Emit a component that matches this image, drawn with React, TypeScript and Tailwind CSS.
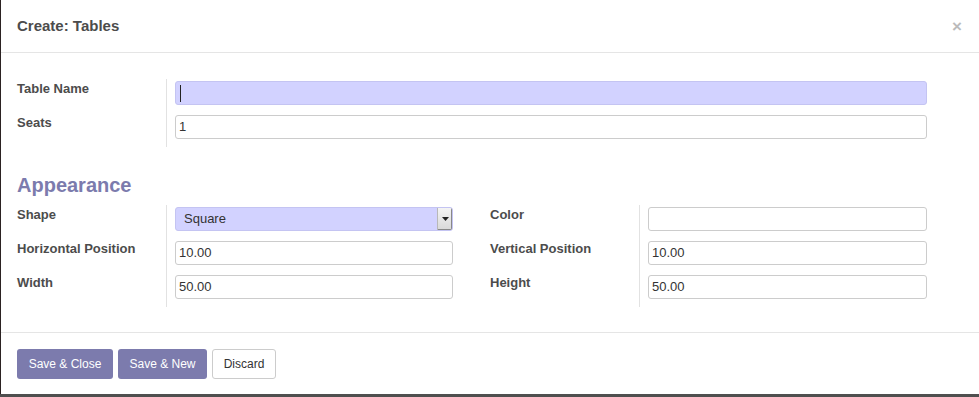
import React from 'react'

const font = { fontFamily: '"Liberation Sans", Arial, sans-serif' }

function Label({ children }: { children: React.ReactNode }) {
  return (
    <div className="w-[149px] shrink-0 pt-[2px] text-[13px] leading-[16px] font-bold text-[#4c4c4c]">
      {children}
    </div>
  )
}

function TextInput({ value, focused }: { value?: string; focused?: boolean }) {
  return (
    <div
      className={`h-[24px] rounded-[3px] border flex items-center pl-[3px] text-[13px] text-[#333] ${
        focused ? 'bg-[#d2d2ff] border-[#c4c4f2]' : 'bg-white border-[#cccccc]'
      }`}
    >
      {focused && <span className="ml-[1px] w-[1px] h-[17px] bg-[#222]" />}
      {value}
    </div>
  )
}

function Row({
  label,
  children,
}: {
  label: string
  children: React.ReactNode
}) {
  return (
    <div className="flex h-[34px]">
      <Label>{label}</Label>
      <div className="flex-1 border-l border-[#e2e2e2] pl-[8px] pt-[2px]">{children}</div>
    </div>
  )
}

function SelectBox({ value }: { value: string }) {
  return (
    <div className="h-[24px] rounded-[3px] border border-[#c4c4f2] bg-[#d2d2ff] flex items-center text-[13px] text-[#333] overflow-hidden">
      <span className="pl-[8px] flex-1">{value}</span>
      <div className="w-[15px] h-[22px] bg-gradient-to-b from-[#f4f4f4] to-[#d8d8d8] border-l border-[#b8b8b8] shadow-[inset_-1px_-1px_0_#888] flex items-center justify-center">
        <svg width="7" height="4" viewBox="0 0 7 4">
          <path d="M0 0h7L3.5 4z" fill="#222" />
        </svg>
      </div>
    </div>
  )
}

export default function App() {
  return (
    <div className="w-[979px] h-[397px] flex flex-col bg-white" style={font}>
      <div className="flex-1 flex flex-col border-l border-[#2b2222]">
        <header className="h-[53px] flex items-center justify-between pl-[16px] pr-[16px] border-b border-[#e5e5e5]">
          <h4 className="text-[15px] font-bold text-[#4c4c4c]">Create: Tables</h4>
          <span className="text-[17px] font-bold text-[#bbbbbb] leading-none pr-[1px]">×</span>
        </header>

        <div className="flex-1 pl-[16px] pr-[52px] pt-[26px]">
          <div>
            <Row label="Table Name">
              <TextInput focused />
            </Row>
            <Row label="Seats">
              <TextInput value="1" />
            </Row>
          </div>

          <h2 className="mt-[26px] mb-[8px] h-[24px] text-[20px] leading-[24px] font-bold text-[#7c7bad]">
            Appearance
          </h2>

          <div className="flex gap-[37px]">
            <div className="w-[436px]">
              <Row label="Shape">
                <SelectBox value="Square" />
              </Row>
              <Row label="Horizontal Position">
                <TextInput value="10.00" />
              </Row>
              <Row label="Width">
                <TextInput value="50.00" />
              </Row>
            </div>
            <div className="flex-1">
              <Row label="Color">
                <TextInput />
              </Row>
              <Row label="Vertical Position">
                <TextInput value="10.00" />
              </Row>
              <Row label="Height">
                <TextInput value="50.00" />
              </Row>
            </div>
          </div>
        </div>

        <footer className="h-[62px] border-t border-[#e5e5e5] pl-[16px] pt-[16px] flex gap-[5px] items-start">
          <button className="w-[96px] h-[30px] rounded-[3px] bg-[#7c7bad] text-white text-[12px]">
            Save &amp; Close
          </button>
          <button className="w-[89px] h-[30px] rounded-[3px] bg-[#7c7bad] text-white text-[12px]">
            Save &amp; New
          </button>
          <button className="w-[64px] h-[30px] rounded-[3px] bg-white border border-[#cccccc] text-[#333] text-[12px]">
            Discard
          </button>
        </footer>
      </div>
      <div className="h-[3px] bg-[#4f4f4f]" />
    </div>
  )
}
